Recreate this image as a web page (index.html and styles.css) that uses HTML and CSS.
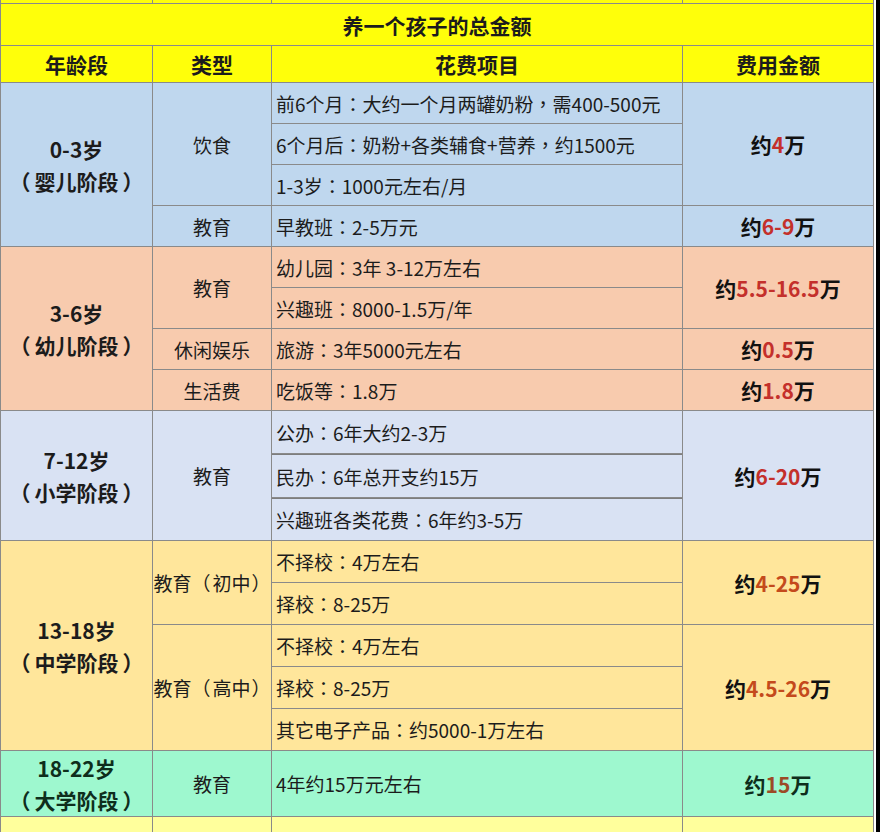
FILE: index.html
```html
<!DOCTYPE html>
<html lang="zh-CN">
<head>
<meta charset="utf-8">
<title>养一个孩子的总金额</title>
<link rel="stylesheet" href="styles.css">
</head>
<body>
<div class="frame">
  <div class="sheet">
    <div class="c yellow"></div><div class="c yellow"></div><div class="c yellow"></div><div class="c yellow"></div>

    <div class="c yellow span4 th">养一个孩子的总金额</div>

    <div class="c yellow th">年龄段</div>
    <div class="c yellow th">类型</div>
    <div class="c yellow th">花费项目</div>
    <div class="c yellow th">费用金额</div>

    <div class="c blue rs4 age"><span>0-3岁</span><span><i class="p l">（</i>婴儿阶段<i class="p r">）</i></span></div>
    <div class="c blue rs3 cat">饮食</div>
    <div class="c blue item">前6个月<i class="p">：</i>大约一个月两罐奶粉<i class="p">，</i>需400-500元</div>
    <div class="c blue rs3 amt">约<em>4</em>万</div>
    <div class="c blue item">6个月后<i class="p">：</i>奶粉+各类辅食+营养<i class="p">，</i>约1500元</div>
    <div class="c blue item">1-3岁<i class="p">：</i>1000元左右/月</div>
    <div class="c blue cat">教育</div>
    <div class="c blue item">早教班<i class="p">：</i>2-5万元</div>
    <div class="c blue amt">约<em>6-9</em>万</div>

    <div class="c peach rs4 age"><span>3-6岁</span><span><i class="p l">（</i>幼儿阶段<i class="p r">）</i></span></div>
    <div class="c peach rs2 cat">教育</div>
    <div class="c peach item">幼儿园<i class="p">：</i>3年 3-12万左右</div>
    <div class="c peach rs2 amt">约<em>5.5-16.5</em>万</div>
    <div class="c peach item">兴趣班<i class="p">：</i>8000-1.5万/年</div>
    <div class="c peach cat">休闲娱乐</div>
    <div class="c peach item">旅游<i class="p">：</i>3年5000元左右</div>
    <div class="c peach amt">约<em>0.5</em>万</div>
    <div class="c peach cat">生活费</div>
    <div class="c peach item">吃饭等<i class="p">：</i>1.8万</div>
    <div class="c peach amt">约<em>1.8</em>万</div>

    <div class="c lav rs3 age"><span>7-12岁</span><span><i class="p l">（</i>小学阶段<i class="p r">）</i></span></div>
    <div class="c lav rs3 cat">教育</div>
    <div class="c lav item">公办<i class="p">：</i>6年大约2-3万</div>
    <div class="c lav rs3 amt">约<em>6-20</em>万</div>
    <div class="c lav item thick">民办<i class="p">：</i>6年总开支约15万</div>
    <div class="c lav item thick">兴趣班各类花费<i class="p">：</i>6年约3-5万</div>

    <div class="c gold rs5 age"><span>13-18岁</span><span><i class="p l">（</i>中学阶段<i class="p r">）</i></span></div>
    <div class="c gold rs2 cat">教育<i class="p l">（</i>初中<i class="p r">）</i></div>
    <div class="c gold item">不择校<i class="p">：</i>4万左右</div>
    <div class="c gold rs2 amt">约<em>4-25</em>万</div>
    <div class="c gold item">择校<i class="p">：</i>8-25万</div>
    <div class="c gold rs3 cat">教育<i class="p l">（</i>高中<i class="p r">）</i></div>
    <div class="c gold item">不择校<i class="p">：</i>4万左右</div>
    <div class="c gold rs3 amt">约<em>4.5-26</em>万</div>
    <div class="c gold item">择校<i class="p">：</i>8-25万</div>
    <div class="c gold item">其它电子产品<i class="p">：</i>约5000-1万左右</div>

    <div class="c mint age"><span>18-22岁</span><span><i class="p l">（</i>大学阶段<i class="p r">）</i></span></div>
    <div class="c mint cat">教育</div>
    <div class="c mint item">4年约15万元左右</div>
    <div class="c mint amt">约<em>15</em>万</div>

    <div class="c lemon"></div><div class="c lemon"></div><div class="c lemon"></div><div class="c lemon"></div>
  </div>
</div>
</body>
</html>
```
FILE: styles.css
```css
html, body {
  margin: 0;
  padding: 0;
  overflow: hidden;
  background: #ffffff;
}

.frame {
  width: 880px;
  height: 832px;
  display: flex;
  box-sizing: border-box;
  border-right: 4px solid #000000;
  background: #ffffff;
}

.sheet {
  width: 874px;
  display: grid;
  grid-template-columns: 151px 118px 410px 190px;
  grid-template-rows: 3px 41px 36px 40px 40px 40px 40px 40px 40px 40px 40px 42px 43px 42px 41px 41px 41px 41px 41px 65px 15px;
  gap: 1px;
  padding: 0 1px;
  box-sizing: border-box;
  background: #8a8a8a;
  font-family: "Noto Sans CJK SC", "Noto Sans", sans-serif;
  color: #1c1c1c;
  font-size: 19px;
}

.c {
  display: flex;
  align-items: center;
  justify-content: center;
  overflow: hidden;
  white-space: nowrap;
  box-sizing: border-box;
}

.p {
  font-style: normal;
  font-family: "Noto Sans CJK TC", "Noto Sans CJK SC", sans-serif;
}

.age .p.l { margin-right: 4px; }
.age .p.r { margin-left: 4px; }
.cat .p.l { margin: 0 2px 0 0; }
.cat .p.r { margin: 0 0 0 1px; }

.span4 { grid-column: span 4; }
.rs2 { grid-row: span 2; }
.rs3 { grid-row: span 3; }
.rs4 { grid-row: span 4; }
.rs5 { grid-row: span 5; }

.yellow { background: #ffff0a; }
.blue { background: #bfd7ee; }
.peach { background: #f8cbae; }
.lav { background: #d9e2f3; }
.gold { background: #ffe69b; }
.mint { background: #9ef8cf; }
.lemon { background: #ffff9c; }

.th {
  font-weight: 700;
  font-size: 21px;
}

.age {
  flex-direction: column;
  font-weight: 700;
  font-size: 21px;
  line-height: 32px;
}

.cat {
  font-size: 19px;
}

.item {
  justify-content: flex-start;
  padding-left: 4px;
  font-size: 19px;
}

.thick {
  border-top: 1px solid #7d7d7d;
}

.amt {
  font-weight: 700;
  font-size: 21px;
  color: #111111;
}

.amt em {
  font-style: normal;
  color: #c4302b;
}

.gold.amt em {
  color: #c44a1c;
}

.mint.age, .mint.amt {
  color: #0e2e1c;
}

.mint.amt em {
  color: #9c4a26;
}
```
